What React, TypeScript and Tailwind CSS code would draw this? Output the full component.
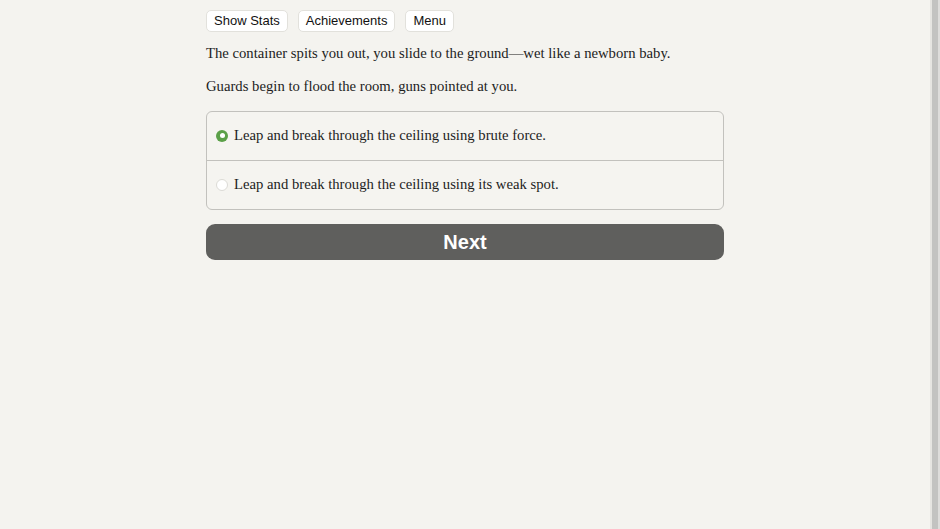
import React, { useState } from 'react';

const options = [
  'Leap and break through the ceiling using brute force.',
  'Leap and break through the ceiling using its weak spot.',
];

const App: React.FC = () => {
  const [choice, setChoice] = useState(0);

  return (
    <div className="flex h-[529px] w-full overflow-hidden bg-[#f4f3ef]">
      {/* Main column */}
      <div className="flex-1">
        <div className="mx-auto w-[518px] pt-[10px]">
          {/* Top buttons */}
          <div className="flex gap-[10px] font-['Liberation_Sans',Arial,sans-serif] text-[13px] text-[#111]">
            <button className="h-[22px] rounded-[5px] border border-[#e2e1dc] bg-white px-[7px] leading-[20px]">Show Stats</button>
            <button className="h-[22px] rounded-[5px] border border-[#e2e1dc] bg-white px-[7px] leading-[20px]">Achievements</button>
            <button className="h-[22px] rounded-[5px] border border-[#e2e1dc] bg-white px-[7px] leading-[20px]">Menu</button>
          </div>

          {/* Story text */}
          <div className="font-['Liberation_Serif',serif] text-[14.7px] text-[#1c1c1c]">
            <p className="mt-[11px] leading-[20px]">The container spits you out, you slide to the ground—wet like a newborn baby.</p>
            <p className="mt-[13px] leading-[20px]">Guards begin to flood the room, guns pointed at you.</p>
          </div>

          {/* Choices */}
          <div className="mt-[15px] overflow-hidden rounded-[6px] border border-[#c2c1bd] bg-[#f5f4f0]">
            {options.map((text, i) => (
              <label
                key={i}
                onClick={() => setChoice(i)}
                className={`flex cursor-pointer items-center gap-[6px] pb-[1px] pl-[9px] font-['Liberation_Serif',serif] text-[14.7px] text-[#1c1c1c] ${i > 0 ? 'h-[49px] border-t border-[#c2c1bd]' : 'h-[48px]'}`}
              >
                {choice === i ? (
                  <span className="flex h-[12px] w-[12px] items-center justify-center rounded-full bg-[#5ba048]">
                    <span className="h-[5px] w-[5px] rounded-full bg-white" />
                  </span>
                ) : (
                  <span className="h-[12px] w-[12px] rounded-full border border-[#dcdbd6] bg-white" />
                )}
                {text}
              </label>
            ))}
          </div>

          {/* Next */}
          <button className="mt-[14px] h-[36px] w-full rounded-[9px] bg-[#5f5f5d] font-['Liberation_Sans',Arial,sans-serif] text-[20px] font-bold text-white">
            Next
          </button>
        </div>
      </div>

      {/* Scrollbar */}
      <div className="flex w-[10px]">
        <div className="w-[2px] bg-[#e6e5e1]" />
        <div className="w-[6px] bg-[#c3c3c1]" />
        <div className="w-[2px] bg-[#dedddb]" />
      </div>
    </div>
  );
};

export default App;
